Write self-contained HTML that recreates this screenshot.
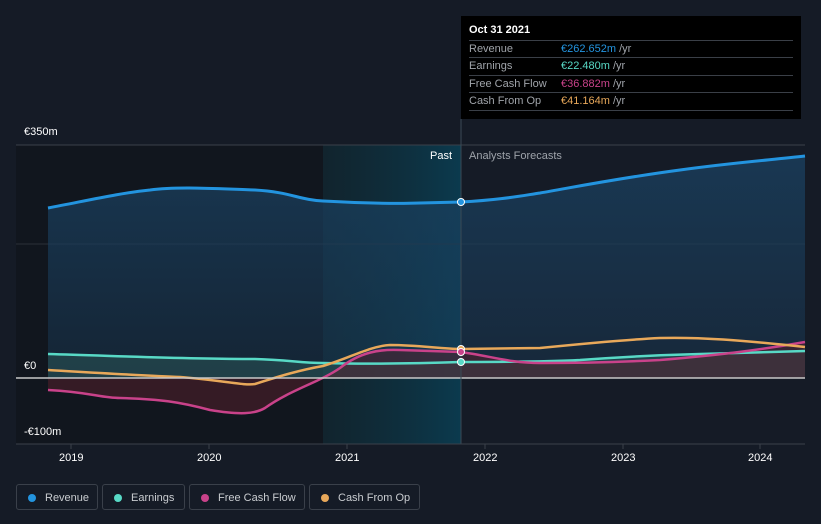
<!DOCTYPE html>
<html><head><meta charset="utf-8"><style>
body{margin:0;width:821px;height:524px;background:#151b26;font-family:"Liberation Sans",sans-serif;overflow:hidden;position:relative}
.t{position:absolute;font-size:11px;color:#fff}
.tip{position:absolute;left:461px;top:16px;width:340px;height:103px;background:#000}
.tip .h{position:absolute;left:8px;top:8px;color:#fff;font-size:11px;font-weight:bold}
.row{position:absolute;left:8px;width:324px;border-top:1px solid #3a3f47;font-size:11px;color:#a0a4aa;height:17px;line-height:17px}
.row span{position:absolute;left:92px}
.row i{font-style:normal;color:#a0a4aa}
.leg{position:absolute;top:484px;height:26px;border:1px solid #3a404a;border-radius:3px;color:#c9ccd0;font-size:11px;line-height:26px;box-sizing:border-box}
.leg b{position:absolute;left:11px;top:9px;width:8px;height:8px;border-radius:50%}
</style></head><body>
<svg width="821" height="524" style="position:absolute;left:0;top:0">
<defs>
<linearGradient id="pst" x1="0" x2="1"><stop offset="0" stop-color="#0f2a33" stop-opacity=".6"/><stop offset="1" stop-color="#0b3a4e"/></linearGradient>
<linearGradient id="rv" x1="0" y1="0" x2="0" y2="1"><stop offset="0" stop-color="#1a3f5e" stop-opacity=".8"/><stop offset="1" stop-color="#1a3f5e" stop-opacity=".35"/></linearGradient>
</defs>
<rect x="16" y="145" width="307" height="299" fill="#11161e"/>
<rect x="323" y="145" width="138" height="299" fill="url(#pst)"/>
<line x1="16" y1="145" x2="805" y2="145" stroke="#3a404a"/>
<line x1="16" y1="244" x2="805" y2="244" stroke="#2a3038"/>
<path d="M48 208 C90 200 120 193 150 190 C180 186 220 189 255 190 C290 192 300 200 323 201 C360 203 390 204 420 203 L461 202 C500 200 520 196 540 193 C580 186 620 178 680 170 C730 163 770 160 805 156 L805 378 L48 378Z" fill="url(#rv)"/>
<path d="M48 354 C120 356 180 359 255 359 C290 360 300 363 323 363 C360 364 400 364 461 362 C500 362 540 362 580 360 C620 357 660 355 700 354 L805 351 L805 378 L48 378Z" fill="#2b5a5a" fill-opacity=".5"/>
<path d="M48 390 C90 392 100 398 120 398 C160 399 180 402 210 410 C240 415 255 414 265 408 C290 390 320 382 340 368 C360 352 380 349 400 350 L461 352 C490 356 510 363 540 363 C580 363 620 362 660 360 C720 355 760 350 805 342 L805 378 L48 378Z" fill="#5a1f2c" fill-opacity=".5"/>
<path d="M48 208 C90 200 120 193 150 190 C180 186 220 189 255 190 C290 192 300 200 323 201 C360 203 390 204 420 203 L461 202 C500 200 520 196 540 193 C580 186 620 178 680 170 C730 163 770 160 805 156" fill="none" stroke="#2394df" stroke-width="3"/>
<path d="M48 354 C120 356 180 359 255 359 C290 360 300 363 323 363 C360 364 400 364 461 362 C500 362 540 362 580 360 C620 357 660 355 700 354 L805 351" fill="none" stroke="#58d9c6" stroke-width="2.5"/>
<path d="M48 390 C90 392 100 398 120 398 C160 399 180 402 210 410 C240 415 255 414 265 408 C290 390 320 382 340 368 C360 352 380 349 400 350 L461 352 C490 356 510 363 540 363 C580 363 620 362 660 360 C720 355 760 350 805 342" fill="none" stroke="#c9428a" stroke-width="2.5"/>
<path d="M48 370 C100 373 150 376 180 377 C220 380 245 386 255 384 C280 376 300 370 323 366 C350 358 370 346 390 345 C420 345 440 349 461 349 L540 348 C580 344 620 340 660 338 C700 337 740 340 805 347" fill="none" stroke="#e8a85a" stroke-width="2.5"/>
<line x1="16" y1="378" x2="805" y2="378" stroke="#c8c8c8" stroke-width="1.5"/>
<line x1="461" y1="119" x2="461" y2="444" stroke="#3a4a55"/>
<line x1="16" y1="444" x2="805" y2="444" stroke="#3a404a"/>
<g stroke="#3a404a"><line x1="71" y1="444" x2="71" y2="449"/><line x1="209" y1="444" x2="209" y2="449"/><line x1="347" y1="444" x2="347" y2="449"/><line x1="485" y1="444" x2="485" y2="449"/><line x1="623" y1="444" x2="623" y2="449"/><line x1="760" y1="444" x2="760" y2="449"/></g>
<circle cx="461" cy="202" r="3.5" fill="#2394df" stroke="#fff"/>
<circle cx="461" cy="349" r="3.5" fill="#e8a85a" stroke="#fff"/>
<circle cx="461" cy="352" r="3.5" fill="#c9428a" stroke="#fff"/>
<circle cx="461" cy="362" r="3.5" fill="#58d9c6" stroke="#fff"/>
</svg>
<div class="t" style="left:24px;top:126px">€350m</div>
<div class="t" style="left:24px;top:360px">€0</div>
<div class="t" style="left:24px;top:426px">-€100m</div>
<div class="t" style="left:430px;top:150px">Past</div>
<div class="t" style="left:469px;top:150px;color:#9ea3aa">Analysts Forecasts</div>
<div class="t" style="left:59px;top:452px">2019</div>
<div class="t" style="left:197px;top:452px">2020</div>
<div class="t" style="left:335px;top:452px">2021</div>
<div class="t" style="left:473px;top:452px">2022</div>
<div class="t" style="left:611px;top:452px">2023</div>
<div class="t" style="left:748px;top:452px">2024</div>
<div class="tip"><div class="h">Oct 31 2021</div>
<div class="row" style="top:24px">Revenue<span><em style="font-style:normal;color:#2394df">€262.652m</em> <i>/yr</i></span></div>
<div class="row" style="top:41px">Earnings<span><em style="font-style:normal;color:#58d9c6">€22.480m</em> <i>/yr</i></span></div>
<div class="row" style="top:59px">Free Cash Flow<span><em style="font-style:normal;color:#c9428a">€36.882m</em> <i>/yr</i></span></div>
<div class="row" style="top:76px;border-bottom:1px solid #3a3f47">Cash From Op<span><em style="font-style:normal;color:#e8a85a">€41.164m</em> <i>/yr</i></span></div>
</div>
<div class="leg" style="left:16px;width:82px"><b style="background:#2394df"></b><span style="position:absolute;left:28px">Revenue</span></div>
<div class="leg" style="left:102px;width:83px"><b style="background:#58d9c6"></b><span style="position:absolute;left:28px">Earnings</span></div>
<div class="leg" style="left:189px;width:116px"><b style="background:#c9428a"></b><span style="position:absolute;left:28px">Free Cash Flow</span></div>
<div class="leg" style="left:309px;width:111px"><b style="background:#e8a85a"></b><span style="position:absolute;left:28px">Cash From Op</span></div>
</body></html>
